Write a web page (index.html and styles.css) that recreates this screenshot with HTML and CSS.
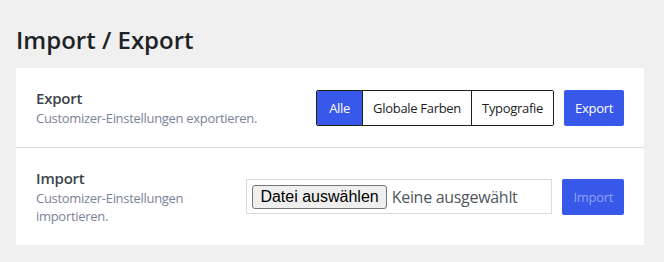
FILE: index.html
```html
<!DOCTYPE html>
<html lang="de">
<head>
  <meta charset="UTF-8" />
  <meta name="viewport" content="width=device-width, initial-scale=1.0"/>
  <title>Import / Export</title>
  <link rel="stylesheet" href="styles.css">
</head>
<body>

  <h1 class="page-title">Import / Export</h1>

  <div class="card">

    <!-- Export row -->
    <div class="row">
      <div class="info">
        <div class="info-title">Export</div>
        <div class="info-desc">Customizer-Einstellungen exportieren.</div>
      </div>
      <div class="controls">
        <div class="toggle-group">
          <button class="toggle active">Alle</button>
          <button class="toggle">Globale Farben</button>
          <button class="toggle">Typografie</button>
        </div>
        <button class="btn-primary">Export</button>
      </div>
    </div>

    <!-- Import row -->
    <div class="row">
      <div class="info">
        <div class="info-title">Import</div>
        <div class="info-desc">Customizer-Einstellungen importieren.</div>
      </div>
      <div class="controls">
        <label class="file-field">
          <input type="file" class="file-input" />
          <span class="file-btn">Datei auswählen</span>
          <span class="file-name">Keine ausgewählt</span>
        </label>
        <button class="btn-primary" disabled>Import</button>
      </div>
    </div>

  </div>

</body>
</html>
```

FILE: styles.css
```css
body {
  margin: 0;
  padding: 0 20px 17px 16px;
  background: #f0f0f0;
  font-family: "Open Sans", "Noto Sans", sans-serif;
  color: #3c434a;
}

.page-title {
  margin: 0;
  padding: 25px 0 13px;
  font-size: 24px;
  font-weight: 600;
  line-height: 30px;
  color: #1d2327;
}

.card {
  background: #fff;
}

.row {
  display: flex;
  align-items: center;
  gap: 10px;
  padding: 20px;
}

.row + .row {
  border-top: 1px solid #dcdcde;
}

.info {
  flex: 1;
}

.info-title {
  font-size: 15px;
  font-weight: 600;
  line-height: 21px;
  letter-spacing: -0.2px;
  color: #3c434a;
}

.info-desc {
  font-size: 13px;
  line-height: 18px;
  letter-spacing: -0.3px;
  color: #7b8399;
}

.controls {
  display: flex;
  align-items: center;
  gap: 10px;
}

.toggle-group {
  display: flex;
  border: 1px solid #1e1e1e;
  border-radius: 2px;
  overflow: hidden;
}

.toggle {
  height: 34px;
  padding: 0 10px;
  border: none;
  background: #fff;
  color: #1e1e1e;
  font-family: inherit;
  font-size: 13px;
  letter-spacing: -0.3px;
  cursor: pointer;
}

.toggle + .toggle {
  border-left: 1px solid #1e1e1e;
}

.toggle.active {
  padding: 0 12px;
  background: #3858e9;
  color: #fff;
}

.btn-primary {
  height: 36px;
  padding: 0 11px;
  border: none;
  border-radius: 2px;
  background: #3858e9;
  color: #fff;
  font-family: inherit;
  font-size: 13px;
  letter-spacing: -0.3px;
  cursor: pointer;
}

.btn-primary:disabled {
  color: rgba(255, 255, 255, 0.45);
  cursor: default;
}

.file-field {
  display: flex;
  align-items: center;
  gap: 5px;
  width: 294px;
  height: 33px;
  padding: 0 5px;
  border: 1px solid #dcdcde;
  cursor: pointer;
}

.file-input {
  display: none;
}

.file-btn {
  padding: 2px 7px;
  border: 1px solid #767676;
  border-radius: 3px;
  background: #efefef;
  color: #000;
  font-family: "Liberation Sans", Arial, sans-serif;
  font-size: 16px;
  line-height: 18px;
}

.file-name {
  font-size: 16px;
  letter-spacing: -0.3px;
  color: #50575e;
}
```
